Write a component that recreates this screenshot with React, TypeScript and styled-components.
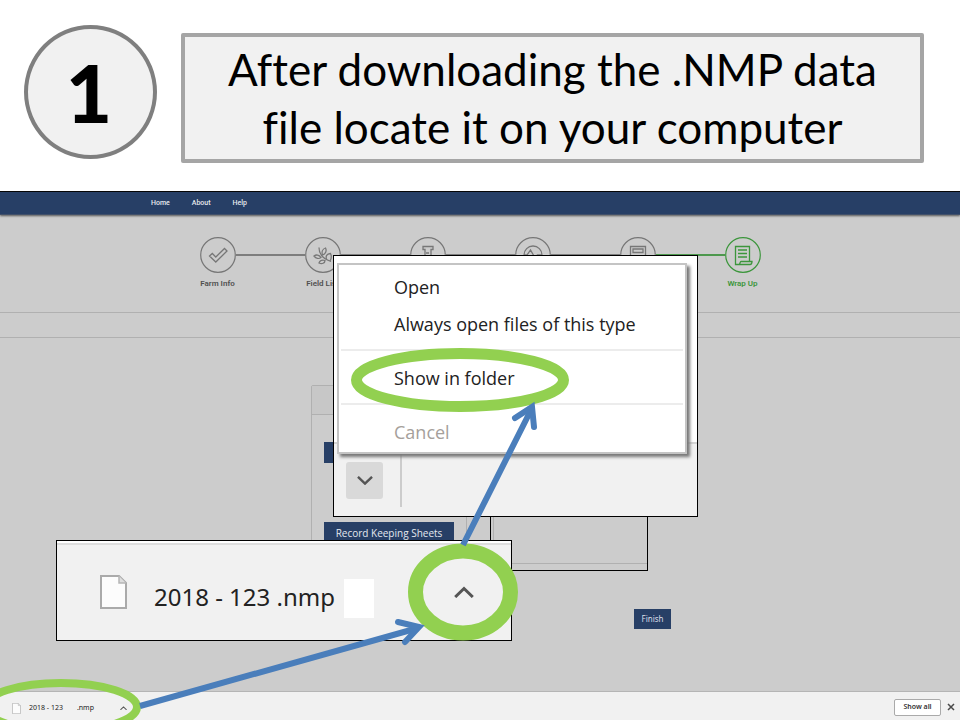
import React from "react";
import styled, { createGlobalStyle } from "styled-components";

const GlobalStyle = createGlobalStyle`
  * { box-sizing: border-box; }
  body { margin: 0; background: #fff; color: #000; font-family: "Open Sans", "Noto Sans", sans-serif; }
  button { font-family: inherit; margin: 0; padding: 0; border: 0; cursor: pointer; }
`;

const Slide = styled.div`
  position: relative;
  display: flex;
  flex-direction: column;
  min-height: 100vh;
  overflow: hidden;
`;

const Header = styled.header`
  display: flex;
  align-items: flex-start;
  gap: 24px;
  padding: 25px 36px 28px 24px;
`;

const StepNumber = styled.div`
  display: flex;
  align-items: center;
  justify-content: center;
  flex: none;
  width: 133px;
  height: 134px;
  padding-right: 3px;
  border: 4px solid #7f7f7f;
  border-radius: 50%;
  background: #f1f1f1;
  font-family: Lato, sans-serif;
  font-size: 80px;
  line-height: 80px;
  font-weight: 900;
`;

const Title = styled.h1`
  flex: 1;
  margin: 8px 0 0;
  padding: 3px 16px;
  border: 4px solid #a5a5a5;
  border-radius: 2px;
  background: #f1f1f1;
  font-family: Lato, sans-serif;
  font-size: 44px;
  line-height: 58px;
  font-weight: 400;
  font-variant-ligatures: none;
  text-align: center;
`;

const Site = styled.section`
  display: flex;
  flex-direction: column;
  flex: 1;
  border-top: 1px solid #000;
  background: #ccc;
`;

const Nav = styled.nav`
  display: flex;
  justify-content: center;
  background: #273f66;
  border-bottom: 1px solid #41506a;
  box-shadow: 0 1px 2px #555;
`;

const NavLinks = styled.div`
  display: flex;
  gap: 22px;
  width: 658px;
  height: 22px;
  align-items: center;
`;

const NavLink = styled.a`
  color: #e6e9ee;
  font: 500 7px/10px Roboto, sans-serif;
  text-decoration: none;
`;

const Steps = styled.ol`
  display: flex;
  justify-content: center;
  height: 98px;
  margin: 0;
  padding: 22px 0 0;
  list-style: none;
  border-bottom: 1px solid #b0b0b0;
`;

const Step = styled.li<{ $active?: boolean }>`
  display: flex;
  flex-direction: column;
  align-items: center;
  gap: 6px;
  width: 105px;
  color: ${(p) => (p.$active ? "#3c963c" : "#777")};
`;

const StepTrack = styled.div`
  display: flex;
  align-items: center;
  align-self: stretch;
`;

const Connector = styled.span<{ $show?: boolean; $green?: boolean }>`
  flex: 1;
  height: 2px;
  background: ${(p) => (!p.$show ? "transparent" : p.$green ? "#4d984d" : "#7d7d7d")};
`;

const StepLabel = styled.span<{ $active?: boolean }>`
  color: ${(p) => (p.$active ? "#3c963c" : "#505050")};
  font: 600 8px/10px Roboto, sans-serif;
`;

const SubBar = styled.div`
  height: 25px;
  border-bottom: 1px solid #b0b0b0;
`;

const Content = styled.main`
  display: flex;
  flex-direction: column;
  flex: 1;
  align-self: center;
  width: 382px;
  padding-top: 47px;
`;

const Panels = styled.div`
  display: flex;
  gap: 23px;
  height: 186px;
  padding-left: 22px;
`;

const Panel = styled.div`
  width: 156px;
  border: 1px solid #b0b0b0;
  border-radius: 2px;
`;

const PanelHead = styled.div`
  height: 29px;
  border-bottom: 1px solid #b0b0b0;
  background: #c7c7c7;
`;

const PanelBody = styled.div`
  display: flex;
  flex-direction: column;
  gap: 59px;
  padding: 27px 12px 0;
`;

const BlueButton = styled.button`
  height: 21px;
  background: #273f66;
  color: #e4e8ee;
  font: 400 10px/20px "Open Sans", sans-serif;
`;

const OutlinedBox = styled.div`
  display: flex;
  width: 158px;
  padding: 0 0 6px 2px;
  border: 1px solid #000;
`;

const InnerBox = styled.div`
  flex: 1;
  border-left: 1px solid #b0b0b0;
  border-bottom: 1px solid #b0b0b0;
`;

const FinishButton = styled.button`
  align-self: flex-end;
  width: 37px;
  height: 20px;
  margin-top: 38px;
  background: #273f66;
  color: #d9dee6;
  font: 400 8px/20px "Noto Sans", sans-serif;
`;

const DownloadBar = styled.footer`
  display: flex;
  align-items: center;
  height: 29px;
  padding: 2px 5px 0 12px;
  border-top: 1px solid #b5b5b5;
  background: #f1f1f1;
`;

const SmallFile = styled.span`
  display: flex;
  align-items: center;
  flex: 1;
  gap: 8px;
  padding-top: 2px;
  font: 400 7px/10px "Noto Sans", sans-serif;
  color: #222;
`;

const NameParts = styled.span`
  display: flex;
  gap: 14px;
  margin-right: 18px;
`;

const ShowAll = styled.button`
  width: 47px;
  height: 17px;
  margin-right: 6px;
  border: 1px solid #aaa;
  border-radius: 2px;
  background: #fff;
  font: 600 7px/14px "Noto Sans", sans-serif;
  color: #333;
`;

const IconButton = styled.button`
  display: flex;
  background: none;
  color: #4a4a4a;
`;

const MenuCallout = styled.aside`
  position: absolute;
  left: 333px;
  top: 255px;
  width: 365px;
  border: 1px solid #000;
  background: linear-gradient(#fff 186px, #d4d4d4 186px, #d4d4d4 188px, #f1f1f1 188px);
  padding: 7px 10px 9px 3px;
`;

const Menu = styled.div`
  display: flex;
  flex-direction: column;
  padding: 3px 2px 2px;
  border: 2px solid #c4c4c4;
  background: #fff;
  box-shadow: 3px 3px 3px #777;
  clip-path: inset(0 -8px -8px 0);
`;

const MenuItem = styled.button<{ $muted?: boolean }>`
  height: 37px;
  padding-left: 53px;
  background: none;
  color: ${(p) => (p.$muted ? "#a5a09b" : "#222")};
  font: 400 18px/36px "Open Sans", sans-serif;
  text-align: left;
`;

const Rule = styled.hr`
  width: 100%;
  height: 2px;
  margin: 7px 0 8px;
  border: 0;
  background: #ececec;
`;

const MenuFooter = styled.div`
  display: flex;
  align-items: center;
  gap: 17px;
  padding-left: 9px;
`;

const ChevronButton = styled.button`
  display: flex;
  align-items: center;
  justify-content: center;
  width: 37px;
  height: 37px;
  border-radius: 3px;
  background: #d9d9d9;
`;

const Divider = styled.span`
  width: 2px;
  height: 53px;
  background: #ccc;
`;

const FileCallout = styled.aside`
  position: absolute;
  left: 56px;
  top: 540px;
  width: 456px;
  height: 101px;
  display: flex;
  align-items: center;
  padding: 2px 0 0 43px;
  border: 1px solid #000;
  background: linear-gradient(#fff 2px, #ddd 2px, #ddd 4px, #f1f1f1 4px);
`;

const FileName = styled.span`
  width: 190px;
  margin: 10px 0 0 27px;
  color: #222;
  font: 400 24px/30px "Noto Sans", sans-serif;
  white-space: nowrap;
`;

const Patch = styled.span`
  width: 30px;
  height: 39px;
  margin: 14px 80px 0 0;
  background: #fff;
`;

const Overlay = styled.svg`
  position: absolute;
  left: 0;
  top: 0;
  pointer-events: none;
`;

const glyphs: Record<string, React.ReactNode> = {
  check: <path d="M9.500 19l2.800-2.500 3.500 3.500 8.700-8.500 2.500 2.500L15.800 25z" />,
  leaf: (
    <>
      <path d="M14 10.500c0 6 3 11 12 14" />
      <path d="M17.500 18c-1-3 0-6 3-7 1.500 3 0 6-3 7zM21.500 22c-1-3 0-5 4-5.500 1.500 3 1 5-.5 7.500M16 20.500c-2-3-5-3-7-1.500 2 2.500 5 3 7 1.500zM20 23.500c-3-1-5 0-6 2.500 3 1.500 6 0 6-2.500z" />
    </>
  ),
  flask: <path d="M13 9.500h10v3h-2V19l4 8H11l4-8v-6.500h-2zM16 16h3" />,
  pulse: (
    <>
      <circle cx="18" cy="18" r="9" />
      <path d="M9 18h3l3.500-5 4 7 3-2h4.500" />
    </>
  ),
  calc: (
    <>
      <path d="M10.500 9.500h15v18h-15zM13 12h10v3.500H13z" />
      <path d="M13 19h2M17 19h2M21 19h2M13 23h2M17 23h2M21 23h2" />
    </>
  ),
  scroll: (
    <path d="M13 27.500h-2.500V9.500h14V24M13 13h9M13 16.500h9M13 20h9M14 27.500c1 0 1-3 2-3h11c0 2-1 3-2 3H13" />
  ),
};

const StepIcon = ({ name }: { name: string }) => (
  <svg width="36" height="36" viewBox="0 0 36 36" fill="none" stroke="currentColor" aria-hidden="true">
    <circle cx="18" cy="18" r="17.300" strokeWidth="1.200" />
    <g strokeWidth="1.300">{glyphs[name]}</g>
  </svg>
);

const FileIcon = ({ width, height }: { width: number; height: number }) => (
  <svg width={width} height={height} viewBox="0 0 27 34" aria-hidden="true">
    <path d="M1 1h18l7 7v25H1z" fill="#fcfcfc" stroke="#aaa" strokeWidth="2" />
    <path d="M19 1v7h7" fill="#ddd" stroke="#b5b5b5" strokeWidth="1.500" />
  </svg>
);

const Chevron = ({ up, size }: { up?: boolean; size: number }) => (
  <svg width={size} height={(size * 3) / 5} viewBox="0 0 20 12" fill="none" stroke="#555" strokeWidth="3" aria-hidden="true">
    <path d={up ? "M1.200 11L10 2.500 18.800 11" : "M1.200 1L10 9.500 18.800 1"} />
  </svg>
);

const steps = [
  { icon: "check", label: "Farm Info" },
  { icon: "leaf", label: "Field List" },
  { icon: "flask" },
  { icon: "pulse" },
  { icon: "calc" },
  { icon: "scroll", label: "Wrap Up" },
];

export default function App() {
  const last = steps.length - 1;
  return (
    <>
      <GlobalStyle />
      <Slide>
        <Header>
          <StepNumber>1</StepNumber>
          <Title>
            After downloading the .NMP data
            <br />
            file locate it on your computer
          </Title>
        </Header>
        <Site>
          <Nav>
            <NavLinks>
              <NavLink href="#home">Home</NavLink>
              <NavLink href="#about">About</NavLink>
              <NavLink href="#help">Help</NavLink>
            </NavLinks>
          </Nav>
          <Steps>
            {steps.map((s, i) => (
              <Step key={s.icon} $active={i === last}>
                <StepTrack>
                  <Connector $show={i > 0} $green={i === last} />
                  <StepIcon name={s.icon} />
                  <Connector $show={i < last} $green={i === last - 1} />
                </StepTrack>
                {s.label && <StepLabel $active={i === last}>{s.label}</StepLabel>}
              </Step>
            ))}
          </Steps>
          <SubBar />
          <Content>
            <Panels>
              <Panel>
                <PanelHead />
                <PanelBody>
                  <BlueButton aria-label="Reports" />
                  <BlueButton>Record Keeping Sheets</BlueButton>
                </PanelBody>
              </Panel>
              <OutlinedBox>
                <InnerBox />
              </OutlinedBox>
            </Panels>
            <FinishButton>Finish</FinishButton>
          </Content>
        </Site>
        <DownloadBar>
          <SmallFile>
            <FileIcon width={9} height={11} />
            <NameParts>
              <span>2018 - 123</span>
              <span>.nmp</span>
            </NameParts>
            <IconButton aria-label="File options">
              <Chevron up size={7} />
            </IconButton>
          </SmallFile>
          <ShowAll>Show all</ShowAll>
          <IconButton aria-label="Close">
            <svg width="8" height="8" viewBox="0 0 8 8" stroke="currentColor" strokeWidth="1.500">
              <path d="M1 1l6 6M7 1L1 7" />
            </svg>
          </IconButton>
        </DownloadBar>

        <MenuCallout>
          <Menu>
            <MenuItem>Open</MenuItem>
            <MenuItem>Always open files of this type</MenuItem>
            <Rule />
            <MenuItem>Show in folder</MenuItem>
            <Rule />
            <MenuItem $muted>Cancel</MenuItem>
          </Menu>
          <MenuFooter>
            <ChevronButton aria-label="Close menu">
              <Chevron size={16} />
            </ChevronButton>
            <Divider />
          </MenuFooter>
        </MenuCallout>

        <FileCallout>
          <FileIcon width={27} height={34} />
          <FileName>2018 - 123 .nmp</FileName>
          <Patch />
          <IconButton aria-label="Open file menu">
            <Chevron up size={20} />
          </IconButton>
        </FileCallout>

        <Overlay width="960" height="720" viewBox="0 0 960 720" fill="none" aria-hidden="true">
          <g stroke="#92d050">
            <ellipse cx="460" cy="380" rx="103.500" ry="26.500" strokeWidth="11" />
            <ellipse cx="463" cy="592" rx="47.500" ry="41" strokeWidth="15" />
            <ellipse cx="61" cy="707" rx="76" ry="24" strokeWidth="8" />
          </g>
          <g stroke="#4a7ebb" strokeWidth="6">
            <path d="M463 545L532 408M140 706L418 628" />
            <path d="M515 418L532 407L534 427M398 622L419 627L405 642" strokeLinecap="round" />
          </g>
        </Overlay>
      </Slide>
    </>
  );
}
